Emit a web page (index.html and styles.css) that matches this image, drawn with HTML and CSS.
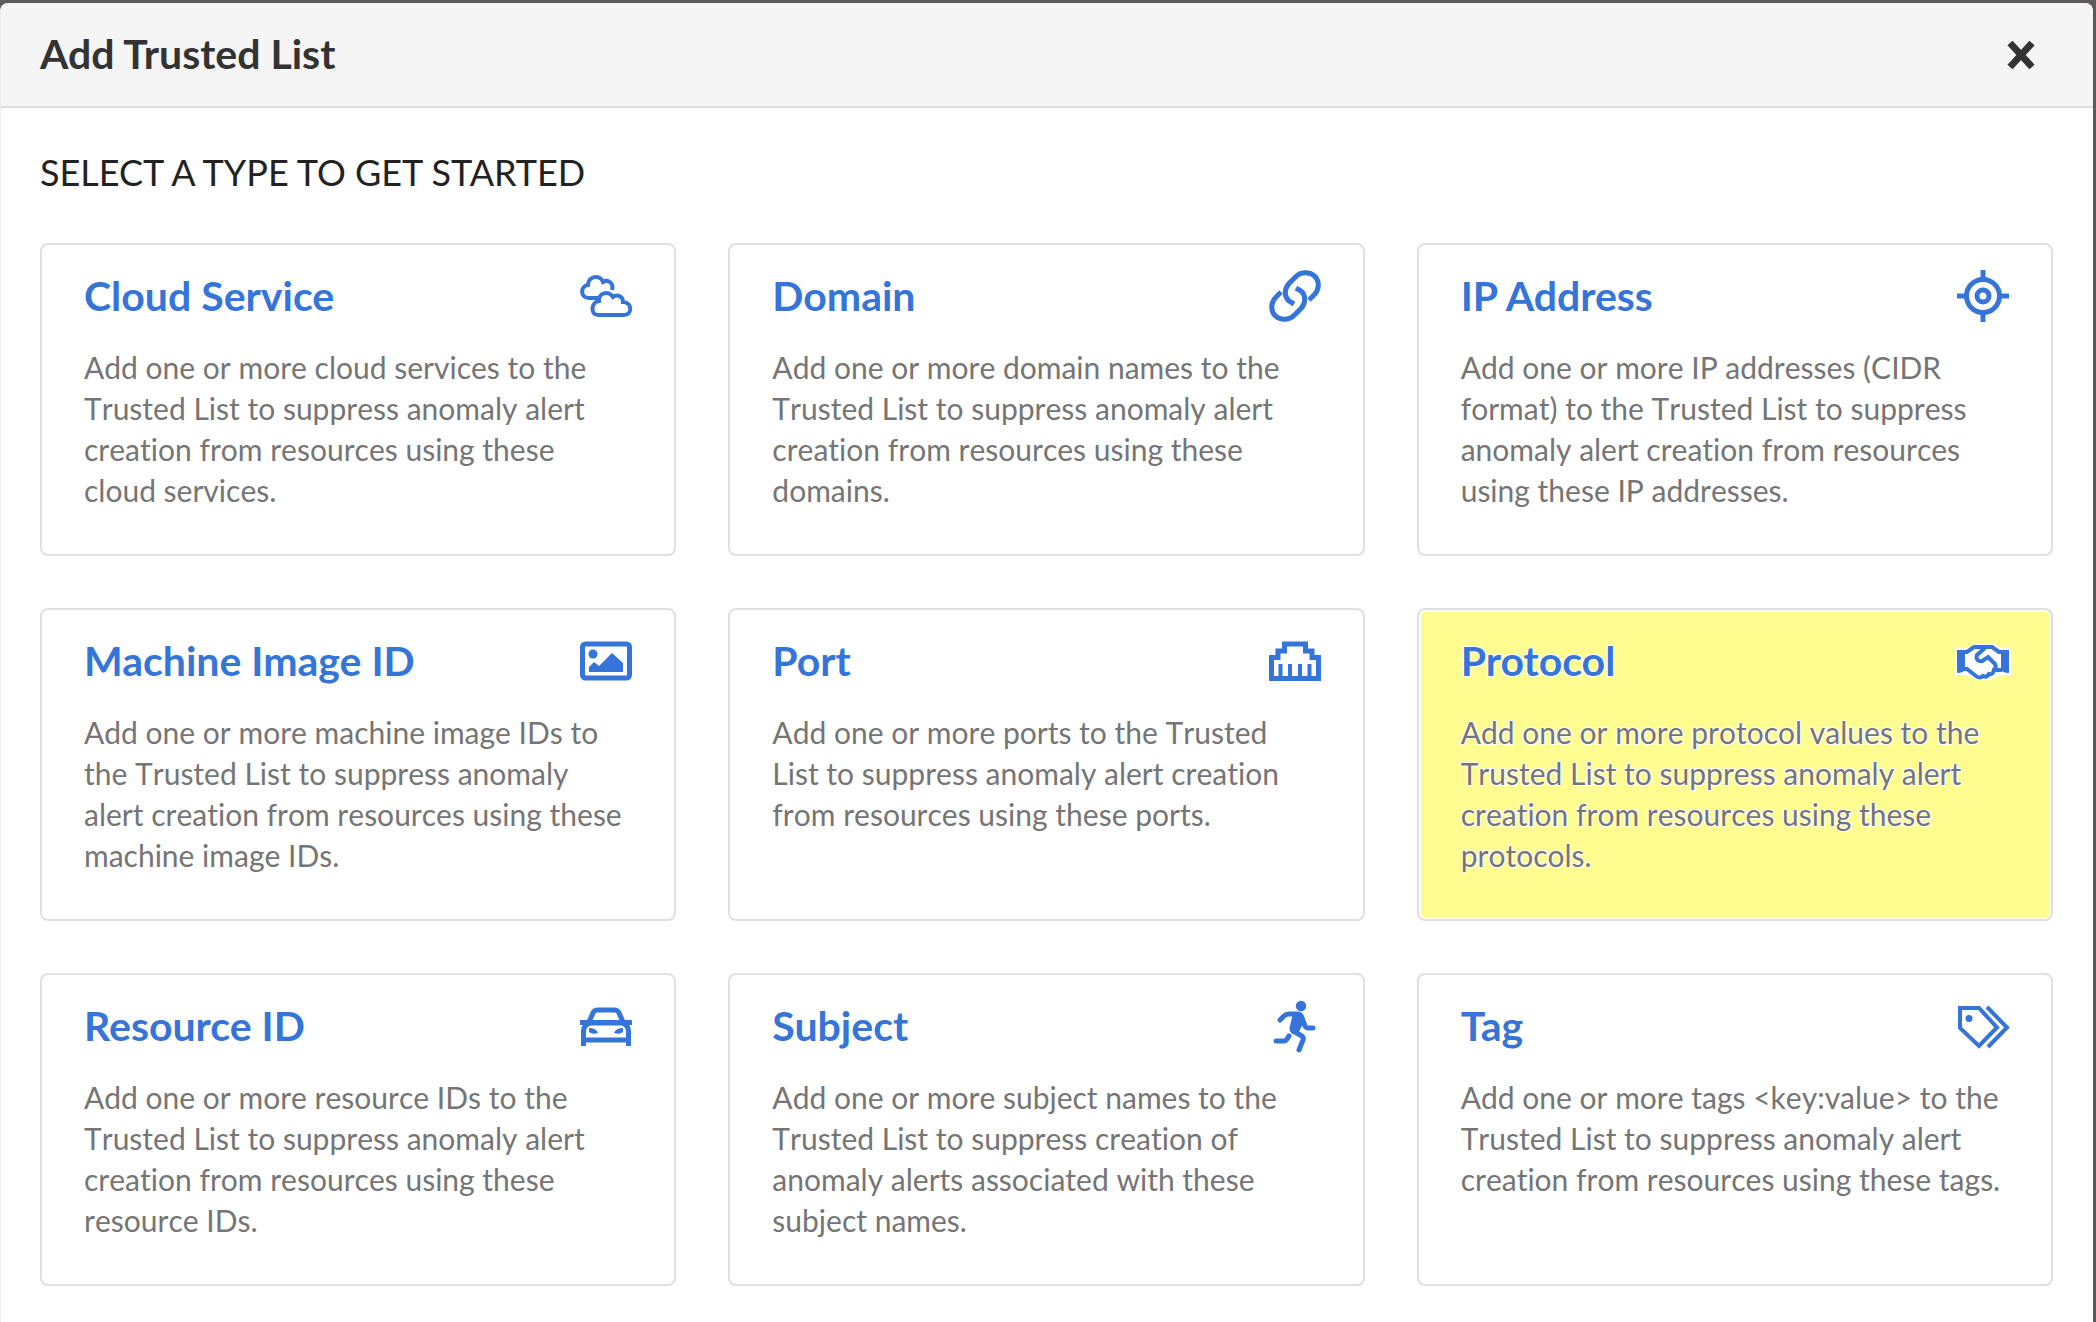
FILE: index.html
```html
<!DOCTYPE html>
<html lang="en">
<head>
<meta charset="utf-8">
<meta name="viewport" content="width=device-width, initial-scale=1">
<title>Add Trusted List</title>
<link rel="stylesheet" href="styles.css">
</head>
<body>
<main class="modal" role="dialog" aria-labelledby="modal-title">
  <header class="modal-header">
    <h1 class="modal-title" id="modal-title">Add Trusted List</h1>
    <button class="close" type="button" aria-label="Close">
      <svg viewBox="0 0 28 32" aria-hidden="true"><path d="M3 5 25 29M25 5 3 29"/></svg>
    </button>
  </header>
  <div class="modal-body">
    <h2 class="prompt">SELECT A TYPE TO GET STARTED</h2>
    <div class="types">
      <button class="card" type="button">
        <span class="card-head"><span class="card-title">Cloud Service</span>
          <svg class="icon thin" viewBox="0 0 52 52" aria-hidden="true"><path d="M18 28H9C0 28 0 16 8 15C8 6 20 4 23 12C28 9 34 13 32 20"/><path d="M18 45H44C53 45 52 32 43 32C43 26 37 24 33 27C29 20 18 23 19 31C11 32 10 45 18 45Z"/></svg>
        </span>
        <span class="card-text">Add one or more cloud services to the Trusted List to suppress anomaly alert creation from resources using these cloud services.</span>
      </button>
      <button class="card" type="button">
        <span class="card-head"><span class="card-title">Domain</span>
          <svg class="icon" viewBox="0 0 52 52" aria-hidden="true"><path d="M40 30 45 25C50 20 51 12 46 6.500C41 1.500 32 1.500 27 6.500L20 13.500C15 19 15 27 20 31L25 34"/><path d="M12 22 7 27C2 32 1 40 6 45.500C11 50.500 20 50.500 25 45.500L32 38.500C37 33 37 25 32 21L27 18"/></svg>
        </span>
        <span class="card-text">Add one or more domain names to the Trusted List to suppress anomaly alert creation from resources using these domains.</span>
      </button>
      <button class="card" type="button">
        <span class="card-head"><span class="card-title">IP Address</span>
          <svg class="icon" viewBox="0 0 52 52" aria-hidden="true"><circle cx="26" cy="26" r="16.500"/><circle cx="26" cy="26" r="6"/><path d="M26 0V9M26 43V52M0 26H9M43 26H52"/></svg>
        </span>
        <span class="card-text">Add one or more IP addresses (CIDR format) to the Trusted List to suppress anomaly alert creation from resources using these IP addresses.</span>
      </button>
      <button class="card" type="button">
        <span class="card-head"><span class="card-title">Machine Image ID</span>
          <svg class="icon" viewBox="0 0 52 52" aria-hidden="true"><rect x="2.500" y="9" width="47" height="34" rx="3"/><circle class="solid" cx="13" cy="19" r="4.500"/><path class="solid" d="M9 37V32L14 27 19 31 32 18 43 28V37Z"/></svg>
        </span>
        <span class="card-text">Add one or more machine image IDs to the Trusted List to suppress anomaly alert creation from resources using these machine image IDs.</span>
      </button>
      <button class="card" type="button">
        <span class="card-head"><span class="card-title">Port</span>
          <svg class="icon" viewBox="0 0 52 52" aria-hidden="true"><path d="M2.500 43.500V22.500H9V16H15.500V9H36.500V16H43V22.500H49.500V43.500Z"/><path class="pins" d="M11.500 29V43M21 29V43M31 29V43M40.500 29V43"/></svg>
        </span>
        <span class="card-text">Add one or more ports to the Trusted List to suppress anomaly alert creation from resources using these ports.</span>
      </button>
      <button class="card highlighted" type="button">
        <span class="card-head"><span class="card-title">Protocol</span>
          <svg class="icon thin" viewBox="0 0 52 52" aria-hidden="true"><path class="halo" d="M0 15H10L17 11H36L43 15H52V38H44L32 43H22L9 38H0Z"/><path class="solid" d="M0 15H8V34Q7 38 0 38ZM52 15H44V34Q45 38 52 38Z"/><path d="M7 17H10L17 12H35L42 17H45M7 34H10L19 41Q23 44 26 41Q30 43 32 39Q36 40 37 35H45M28 13 20 20C18 26 24 28 28 24L31 22 38 29Q40 33 36 36M28 13 23 12"/></svg>
        </span>
        <span class="card-text">Add one or more protocol values to the Trusted List to suppress anomaly alert creation from resources using these protocols.</span>
      </button>
      <button class="card" type="button">
        <span class="card-head"><span class="card-title">Resource ID</span>
          <svg class="icon" viewBox="0 0 52 52" aria-hidden="true"><path d="M8.500 23 13 13Q14 10 18 10H34Q38 10 39 13L43.500 23M0 22.500H52M3.500 46V31Q4 24 11 23H41Q48 24 48.500 31V46M4 40H48"/><path class="solid" d="M9 28Q16 28 18 33Q12 35 9 32ZM43 28Q36 28 34 33Q40 35 43 32Z"/></svg>
        </span>
        <span class="card-text">Add one or more resource IDs to the Trusted List to suppress anomaly alert creation from resources using these resource IDs.</span>
      </button>
      <button class="card" type="button">
        <span class="card-head"><span class="card-title">Subject</span>
          <svg class="icon round" viewBox="0 0 52 52" aria-hidden="true"><circle class="solid" cx="32" cy="6" r="5.200"/><path d="M11 20 15 16Q17 14 20 14H28Q32 14 33 18L36 26Q37 28 39 28H44M24 31 33 36Q35 38 34 40L30 50M20 36 18 39Q17 41 15 41H7"/><path class="solid" d="M24 13H33L36 19 30 32 24 34Q19 31 21 26Z"/></svg>
        </span>
        <span class="card-text">Add one or more subject names to the Trusted List to suppress creation of anomaly alerts associated with these subject names.</span>
      </button>
      <button class="card" type="button">
        <span class="card-head"><span class="card-title">Tag</span>
          <svg class="icon thin" viewBox="0 0 52 52" aria-hidden="true"><path d="M3 8H22L40 27.500 22 46 3 28Z"/><path d="M30 7 50 27.500 31 47"/><circle class="solid" cx="12" cy="18.500" r="3.500"/></svg>
        </span>
        <span class="card-text">Add one or more tags &lt;key:value&gt; to the Trusted List to suppress anomaly alert creation from resources using these tags.</span>
      </button>
    </div>
  </div>
</main>
</body>
</html>
```
FILE: styles.css
```css
* {
  box-sizing: border-box;
}

body {
  display: flex;
  min-height: 100vh;
  margin: 0;
  padding: 3px 3px 0 0;
  background: #5c5a5b;
  font-family: Lato, "Open Sans", sans-serif;
}

.modal {
  flex: 1;
  overflow: hidden;
  border-left: 1px solid #ededed;
  border-radius: 8px 8px 0 0;
  background: #fff;
}

.modal-header {
  display: flex;
  align-items: center;
  justify-content: space-between;
  height: 105px;
  padding: 0 58px 2px 39px;
  border-bottom: 2px solid #dcdcdc;
  background: #f5f5f5;
}

.modal-title {
  margin: 0;
  color: #333;
  font-size: 41px;
  line-height: 48px;
}

.close {
  display: flex;
  padding: 0;
  border: 0;
  background: none;
}

.close svg {
  width: 28px;
  height: 32px;
  fill: none;
  stroke: #333;
  stroke-width: 7;
}

.modal-body {
  padding: 40px 40px 36px 39px;
}

.prompt {
  margin: 0 0 47px;
  color: #222;
  font-size: 36px;
  font-weight: 400;
  line-height: 48px;
}

.types {
  display: grid;
  grid-template-columns: repeat(3, 1fr);
  gap: 52px;
}

.card {
  display: flex;
  flex-direction: column;
  justify-content: flex-start;
  gap: 27px;
  padding: 27px 42px 43px;
  border: 2px solid #e0e0e0;
  border-radius: 8px;
  background: #fff;
  color: #757575;
  font-family: inherit;
  font-variant-ligatures: none;
  text-align: left;
}

.card-head {
  display: flex;
  align-items: center;
  justify-content: space-between;
  align-self: stretch;
  height: 48px;
}

.card-title {
  color: #3575d9;
  font-size: 41px;
  font-weight: 700;
  line-height: 48px;
}

.card-text {
  padding-right: 2px;
  font-size: 30px;
  font-kerning: none;
  line-height: 41px;
}

.icon {
  flex: none;
  width: 52px;
  height: 52px;
  overflow: visible;
  fill: none;
  stroke: #3575d9;
  stroke-width: 5;
}

.icon.thin {
  stroke-width: 4;
}

.icon.round {
  stroke-linecap: round;
  stroke-linejoin: round;
}

.icon .solid {
  fill: #3575d9;
  stroke: none;
}

.icon .pins {
  stroke-width: 4;
}

.icon .halo {
  fill: #fff;
  stroke: #fff;
}

.highlighted {
  background: #fffd8f;
  box-shadow: inset 0 0 0 2px #fff;
  text-shadow: 1px 1px #fff, -1px 1px #fff, 1px -1px #fff, -1px -1px #fff;
}
```
